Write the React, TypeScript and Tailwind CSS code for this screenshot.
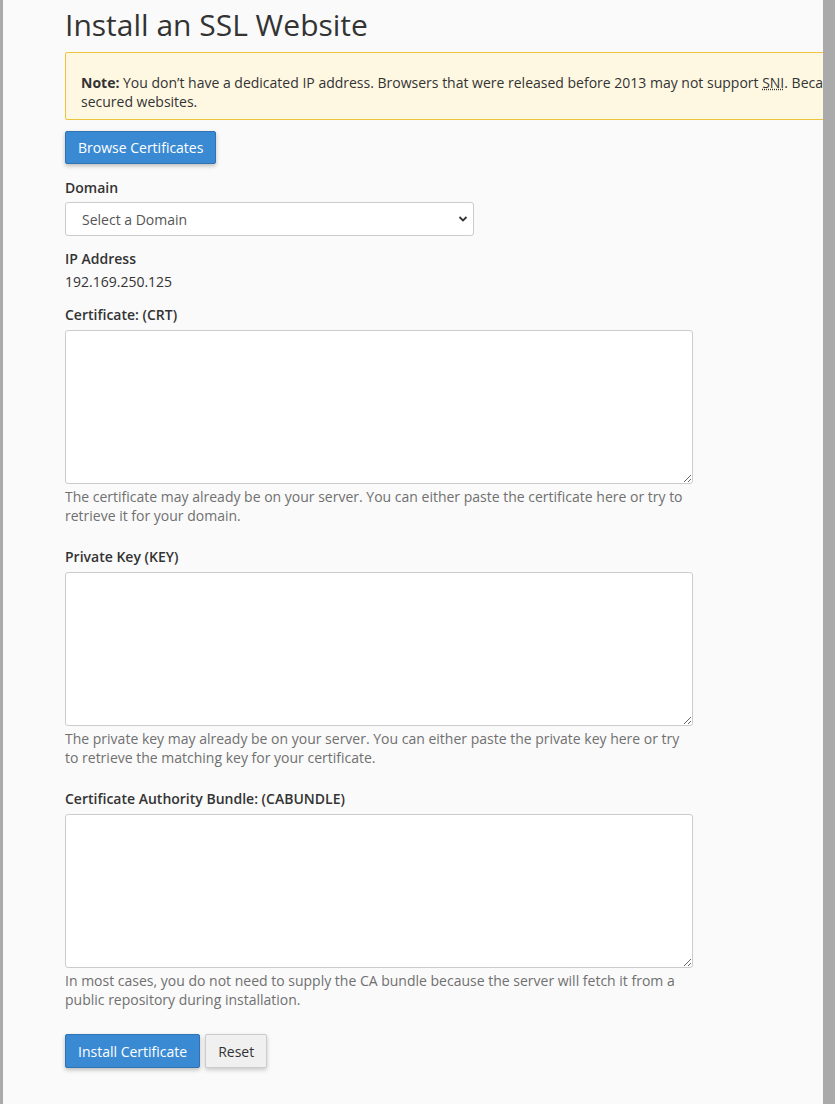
export default function App() {
  const ta = "block w-[628px] h-[154px] bg-white border border-[#ccc] rounded-[3px] resize-y";
  const help = "text-[14px] leading-[19px] text-[#707070] w-[628px] mt-[3px]";
  const label = "block text-[14px] font-semibold text-[#333] leading-[20px]";
  return (
    <div className="flex w-[835px] h-[1104px] bg-[#fafafa] overflow-hidden" style={{ fontFamily: '"Open Sans", sans-serif' }}>
      <div className="w-[3px] shrink-0 bg-[#aaa]" />
      <div className="w-[820px] shrink-0 overflow-hidden pl-[62px] text-[#333]">
        <h1 className="text-[30px] leading-[36px] font-normal text-[#333] mt-[7px] mb-[9px] whitespace-nowrap">Install an SSL Website</h1>
        <div className="w-[1000px] h-[68px] border border-[#f0c33c] bg-[#fef8e2] rounded-[2px] px-[15px] pt-[20px] text-[14px] leading-[19px] whitespace-nowrap">
          <div><b>Note:</b> You don’t have a dedicated IP address. Browsers that were released before 2013 may not support <abbr className="underline decoration-dotted">SNI</abbr>. Because of this, visitors may see</div>
          <div>secured websites.</div>
        </div>
        <button className="mt-[11px] h-[33px] px-[12px] bg-[#3a8ad3] border border-[#2f73b3] text-white text-[14px] rounded-[2px] shadow-[0_2px_4px_rgba(0,0,0,0.25)]">Browse Certificates</button>
        <div className="mt-[14px]">
          <label className={label}>Domain</label>
          <div className="relative mt-[4px] w-[409px] h-[34px] bg-white border border-[#ccc] rounded-[3px] flex items-center pl-[16px] text-[14px] text-[#555]">
            Select a Domain
            <svg className="absolute right-[5px] top-[12px]" width="10" height="8" viewBox="0 0 10 8"><path d="M1.5 2l3.5 3.5L8.5 2" stroke="#333" strokeWidth="1.8" fill="none" /></svg>
          </div>
        </div>
        <div className="mt-[13px]">
          <label className={label}>IP Address</label>
          <div className="text-[14px] leading-[20px] mt-[3px]">192.169.250.125</div>
        </div>
        <div className="mt-[13px]">
          <label className={label}>Certificate: (CRT)</label>
          <textarea className={ta + " mt-[5px]"} />
          <div className={help}>The certificate may already be on your server. You can either paste the certificate here or try to retrieve it for your domain.</div>
        </div>
        <div className="mt-[22px]">
          <label className={label}>Private Key (KEY)</label>
          <textarea className={ta + " mt-[5px]"} />
          <div className={help}>The private key may already be on your server. You can either paste the private key here or try to retrieve the matching key for your certificate.</div>
        </div>
        <div className="mt-[22px]">
          <label className={label}>Certificate Authority Bundle: (CABUNDLE)</label>
          <textarea className={ta + " mt-[5px]"} />
          <div className={help}>In most cases, you do not need to supply the CA bundle because the server will fetch it from a public repository during installation.</div>
        </div>
        <div className="mt-[25px] flex gap-[5px]">
          <button className="h-[34px] px-[12px] bg-[#3a8ad3] border border-[#2f73b3] text-white text-[14px] rounded-[2px] shadow-[0_2px_4px_rgba(0,0,0,0.25)]">Install Certificate</button>
          <button className="h-[34px] px-[12px] bg-[#f0f0f0] border border-[#ccc] text-[#333] text-[14px] rounded-[2px] shadow-[0_2px_4px_rgba(0,0,0,0.2)]">Reset</button>
        </div>
      </div>
      <div className="flex-1 bg-[#aaa]" />
    </div>
  );
}
